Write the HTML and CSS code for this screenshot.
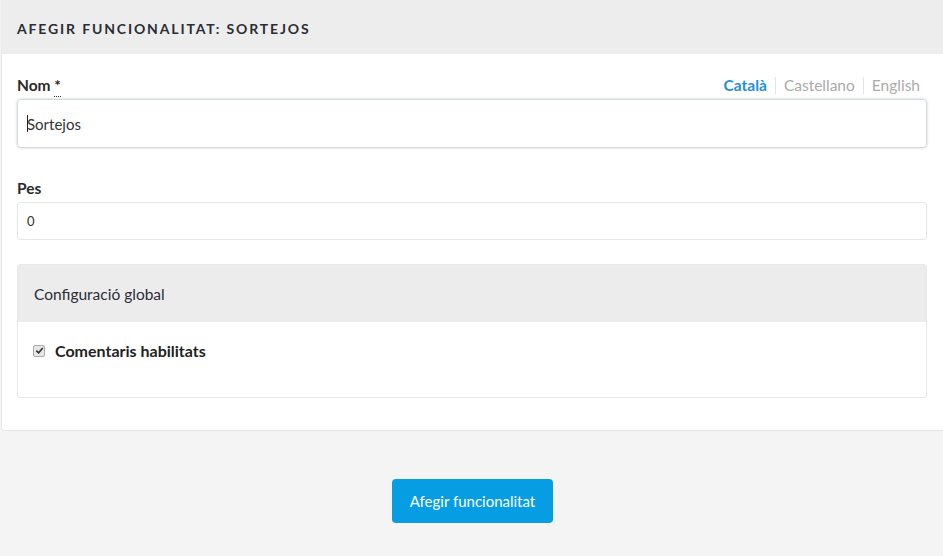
FILE: index.html
```html
<!DOCTYPE html>
<html lang="ca">
<head>
<meta charset="utf-8">
<link rel="stylesheet" href="styles.css">
</head>
<body>
<div class="card">
  <div class="card-head"><h1>Afegir funcionalitat: Sortejos</h1></div>
  <div class="card-body">
    <div class="field">
      <div class="label-row">
        <label class="label">Nom <abbr title="obligatori">*</abbr></label>
        <nav class="langs">
          <span class="lang active">Català</span>
          <span class="lang">Castellano</span>
          <span class="lang">English</span>
        </nav>
      </div>
      <div class="input focused"><span class="caret"></span>Sortejos</div>
    </div>
    <div class="field">
      <div class="label-row"><label class="label">Pes</label></div>
      <div class="input small">0</div>
    </div>
    <div class="panel">
      <div class="panel-head">Configuració global</div>
      <div class="panel-body">
        <label class="check"><span class="box"><svg viewBox="0 0 10 10" width="9" height="9"><path d="M1.5 5.2 L4 7.6 L8.6 2.2" fill="none" stroke="#333" stroke-width="1.8"/></svg></span>Comentaris habilitats</label>
      </div>
    </div>
  </div>
</div>
<div class="actions"><button class="btn">Afegir funcionalitat</button></div>
</body>
</html>
```
FILE: styles.css
```css
* { box-sizing: border-box; }
html, body { margin: 0; padding: 0; }
body {
  background: #f4f4f4;
  font-family: "Source Sans Pro", Lato, "Open Sans", sans-serif;
  color: #333;
  width: 943px;
  height: 556px;
  overflow: hidden;
}
.card {
  margin-left: 1px;
  width: 950px;
  background: #fff;
  border: 1px solid #e6e6e6;
  border-top: none;
  border-radius: 0 0 3px 3px;
}
.card-head {
  background: #ededed;
  height: 54px;
  display: flex;
  align-items: center;
  padding-left: 16px;
  margin-left: -1px;
}
.card-head h1 {
  margin: 0;
  font-size: 14px;
  font-weight: 700;
  text-transform: uppercase;
  letter-spacing: 1.85px;
  color: #2c2c35;
  padding-top: 3px;
}
.card-body {
  padding: 20px 0 32px 15px;
  width: 926px;
}
.field { margin-bottom: 24px; }
.field:first-child { margin-bottom: 29px; }
.label-row {
  display: flex;
  justify-content: space-between;
  align-items: center;
  height: 22px;
  margin-bottom: 3px;
}
.label {
  font-size: 15.5px;
  font-weight: 700;
  color: #2a2a2a;
}
.label abbr {
  text-decoration: none;
  border-bottom: 1px dotted #333;
  font-weight: 700;
  padding-bottom: 2px;
}
.langs {
  display: flex;
  font-size: 15.5px;
}
.lang {
  color: #aaa;
  padding: 0 8px;
  border-left: 1px solid #e3e3e3;
  line-height: 17px;
}
.lang:first-child { border-left: none; }
.lang.active { color: #1f8fd6; font-weight: 700; padding-left: 6px; }
.input {
  height: 49px;
  width: 910px;
  border: 1px solid #d5d9dc;
  border-radius: 4px;
  box-shadow: 0 0 2px 1px #e4e8ea;
  display: flex;
  align-items: center;
  padding-left: 9px;
  font-size: 15px;
  color: #333;
}
.caret {
  width: 1px;
  height: 17px;
  background: #222;
  margin-right: -1px;
}
.input.small {
  height: 38px;
  border-color: #e6e6e6;
  box-shadow: none;
  font-size: 13px;
  padding-left: 9px;
  border-radius: 3px;
}
.panel {
  width: 910px;
  border: 1px solid #e8e8e8;
  border-radius: 3px;
}
.panel-head {
  background: #ececec;
  height: 57px;
  display: flex;
  align-items: center;
  padding-left: 16px;
  font-size: 15.5px;
  color: #2c2c3a;
}
.panel-body {
  padding: 19px 15px 0;
  height: 75px;
}
.check {
  display: flex;
  align-items: center;
  font-size: 16px;
  font-weight: 700;
  color: #222;
}
.box {
  width: 12px;
  height: 12px;
  border: 1px solid #aaa;
  border-radius: 2px;
  background: #e6e6e6;
  display: flex;
  align-items: center;
  justify-content: center;
  margin-right: 10px;
}
.actions {
  display: flex;
  justify-content: center;
  padding-top: 48px;
  padding-left: 2px;
}
.btn {
  width: 161px;
  height: 44px;
  background: #069de3;
  color: #fff;
  border: none;
  border-radius: 4px;
  font-family: inherit;
  font-size: 15px;
}
```
